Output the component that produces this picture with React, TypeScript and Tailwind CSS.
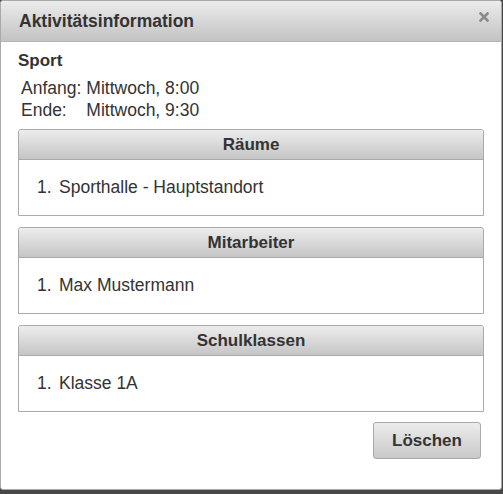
const font = { fontFamily: '"Liberation Sans", Arial, sans-serif' };

function Panel({ title, items }: { title: string; items: string[] }) {
  return (
    <div className="border border-[#aaaaaa] rounded-t-[3px] bg-white">
      <div className="h-[30px] flex items-center justify-center bg-gradient-to-b from-[#ededed] to-[#c5c5c5] border-b border-[#aaaaaa] rounded-t-[3px] text-[17px] font-bold text-[#333]">
        {title}
      </div>
      <ol className="h-[55px] flex flex-col justify-center pl-[18px] text-[17.5px] text-[#333]">
        {items.map((it, i) => (
          <li key={it} className="flex">
            <span className="w-[22px]">{i + 1}.</span>
            <span>{it}</span>
          </li>
        ))}
      </ol>
    </div>
  );
}

export default function App() {
  return (
    <div className="w-[503px] h-[494px] bg-[#474747]" style={font}>
      <div className="w-[502px] h-[490px] bg-white border border-[#a9a9a9] rounded-[3px] flex flex-col">
        <div className="h-[41px] shrink-0 flex items-center justify-between pl-[18px] pr-[12px] bg-gradient-to-b from-[#ececec] to-[#c3c3c3] border-b border-[#b5b5b5] rounded-t-[3px]">
          <span className="text-[17.5px] font-bold text-[#333]">Aktivitätsinformation</span>
          <svg width="10" height="10" viewBox="0 0 10 10" className="mb-[8px]">
            <path d="M1.5 1.5 L8.5 8.5 M8.5 1.5 L1.5 8.5" stroke="#8a8a8a" strokeWidth="2.6" strokeLinecap="square" />
          </svg>
        </div>
        <div className="px-[17px] pt-[9px] flex flex-col">
          <div className="text-[17px] font-bold text-[#333] leading-[20px]">Sport</div>
          <table className="self-start mt-[6px] ml-[3px] text-[17.5px] text-[#333] leading-[22px]">
            <tbody>
              <tr>
                <td className="pr-[5px]">Anfang:</td>
                <td>Mittwoch, 8:00</td>
              </tr>
              <tr>
                <td className="pr-[5px]">Ende:</td>
                <td>Mittwoch, 9:30</td>
              </tr>
            </tbody>
          </table>
          <div className="mt-[8px] flex flex-col gap-[11px]">
            <Panel title="Räume" items={["Sporthalle - Hauptstandort"]} />
            <Panel title="Mitarbeiter" items={["Max Mustermann"]} />
            <Panel title="Schulklassen" items={["Klasse 1A"]} />
          </div>
          <div className="mt-[10px] flex justify-end pr-[3px]">
            <button className="w-[108px] h-[37px] rounded-[3px] border border-[#a9a9a9] bg-gradient-to-b from-[#ececec] to-[#c9c9c9] text-[17px] font-bold text-[#333]">
              Löschen
            </button>
          </div>
        </div>
      </div>
    </div>
  );
}
